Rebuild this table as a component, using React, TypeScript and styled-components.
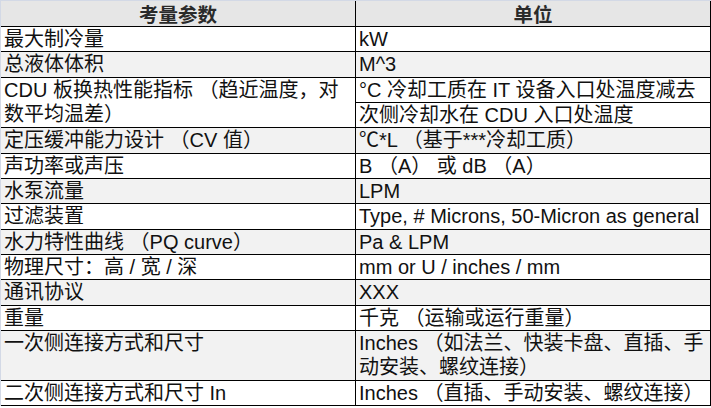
import React from 'react'
import styled, { createGlobalStyle } from 'styled-components'

const GlobalStyle = createGlobalStyle`
  html, body {
    margin: 0;
    padding: 0;
    background: #ffffff;
  }
`

const Sheet = styled.table`
  width: 711px;
  table-layout: fixed;
  border-collapse: separate;
  border-spacing: 0;
  border-top: 1px solid #d3d9e6;
  border-left: 1px solid #d3d9e6;
  font-family: 'Liberation Sans', 'Noto Sans CJK SC', sans-serif;
  font-size: 20px;
  color: #111;
`

const HeadCell = styled.th<{ $first?: boolean }>`
  box-sizing: border-box;
  width: ${({ $first }) => ($first ? '355px' : 'auto')};
  height: 26px;
  padding: 0;
  line-height: 25px;
  background: #e6e6e6;
  border-right: 1px solid #000;
  border-bottom: 1px solid #000;
  font-family: 'Noto Sans CJK SC', sans-serif;
  font-weight: 700;
  font-size: 19.5px;
  color: #2a2a2a;
  text-align: center;
  vertical-align: middle;
`

const Cell = styled.td<{ $shade?: boolean }>`
  box-sizing: border-box;
  padding: 0 3px;
  line-height: 24.33px;
  background: ${({ $shade }) => ($shade ? '#f2f2f2' : '#ffffff')};
  border-right: 1px solid #000;
  border-bottom: 1px solid #000;
  white-space: nowrap;
  overflow: hidden;
  text-align: left;
  vertical-align: top;
`

type Row = {
  param: string[]
  unit: string[]
  split?: boolean
}

const rows: Row[] = [
  { param: ['最大制冷量'], unit: ['kW'] },
  { param: ['总液体体积'], unit: ['M^3'] },
  {
    param: ['CDU 板换热性能指标 （趋近温度，对', '数平均温差）'],
    unit: ['°C 冷却工质在 IT 设备入口处温度减去', '次侧冷却水在 CDU 入口处温度'],
    split: true,
  },
  { param: ['定压缓冲能力设计 （CV 值）'], unit: ['℃*L （基于***冷却工质）'] },
  { param: ['声功率或声压'], unit: ['B （A） 或 dB （A）'] },
  { param: ['水泵流量'], unit: ['LPM'] },
  { param: ['过滤装置'], unit: ['Type, # Microns, 50-Micron as general'] },
  { param: ['水力特性曲线 （PQ curve）'], unit: ['Pa & LPM'] },
  { param: ['物理尺寸：高 / 宽 / 深'], unit: ['mm or U / inches / mm'] },
  { param: ['通讯协议'], unit: ['XXX'] },
  { param: ['重量'], unit: ['千克 （运输或运行重量）'] },
  {
    param: ['一次侧连接方式和尺寸'],
    unit: ['Inches （如法兰、快装卡盘、直插、手', '动安装、螺纹连接）'],
  },
  { param: ['二次侧连接方式和尺寸 In'], unit: ['Inches （直插、手动安装、螺纹连接）'] },
]

const Lines = ({ lines }: { lines: string[] }) => (
  <>
    {lines.map((l, i) => (
      <React.Fragment key={i}>
        {i > 0 && <br />}
        {l}
      </React.Fragment>
    ))}
  </>
)

const App: React.FC = () => {
  return (
    <>
      <GlobalStyle />
      <Sheet>
        <thead>
          <tr>
            <HeadCell $first>考量参数</HeadCell>
            <HeadCell>单位</HeadCell>
          </tr>
        </thead>
        <tbody>
          {rows.map((r, i) => {
            const shade = i % 2 === 1
            if (r.split) {
              return (
                <React.Fragment key={i}>
                  <tr>
                    <Cell $shade={shade} rowSpan={2}>
                      <Lines lines={r.param} />
                    </Cell>
                    <Cell $shade={shade}>{r.unit[0]}</Cell>
                  </tr>
                  <tr>
                    <Cell $shade={shade}>{r.unit[1]}</Cell>
                  </tr>
                </React.Fragment>
              )
            }
            return (
              <tr key={i}>
                <Cell $shade={shade}>
                  <Lines lines={r.param} />
                </Cell>
                <Cell $shade={shade}>
                  <Lines lines={r.unit} />
                </Cell>
              </tr>
            )
          })}
        </tbody>
      </Sheet>
    </>
  )
}

export default App
